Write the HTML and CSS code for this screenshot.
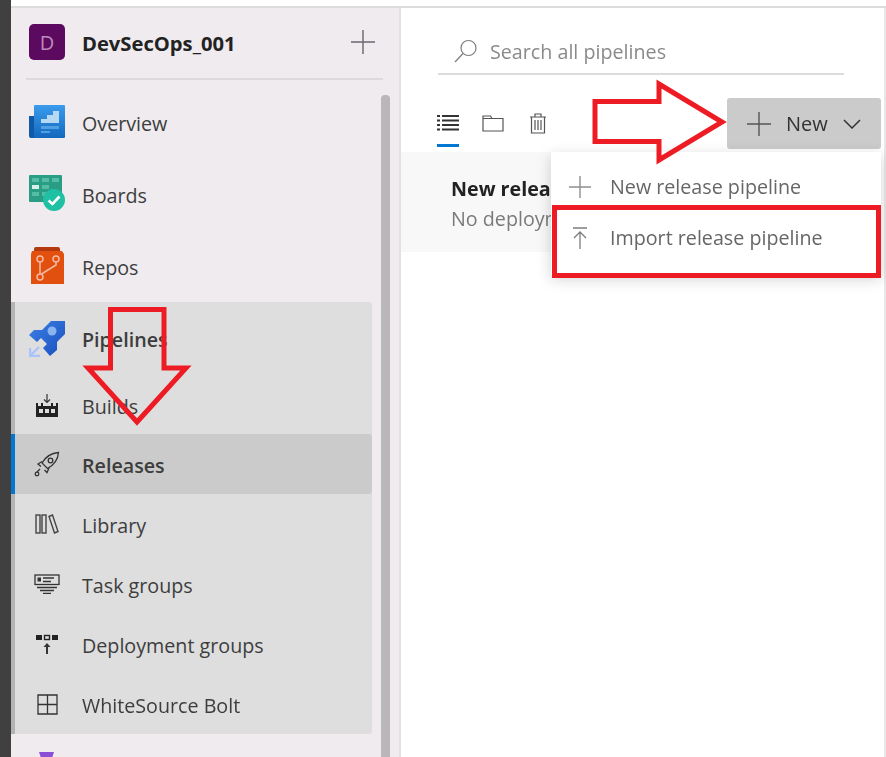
FILE: index.html

```html
<!DOCTYPE html>
<html lang="en">
<head>
  <meta charset="UTF-8">
  <title>Releases - Pipelines</title>
  <link rel="stylesheet" href="styles.css">
</head>
<body>
  <div class="page">
    <div class="topstrip"></div>
    <div class="shell">
      <div class="edge"></div>

      <aside class="sidebar">
        <div class="project">
          <div class="avatar">D</div>
          <div class="project-name">DevSecOps_001</div>
          <svg class="project-add" viewBox="0 0 24 24"><path d="M0 12H24M12 0V24" stroke="#6b6670" stroke-width="1.4" fill="none"/></svg>
        </div>
        <div class="sidebar-body">
          <nav class="nav">
            <a class="nav-item">
              <span class="nav-icon icon-up">
                <svg width="36" height="33" viewBox="0 1 36 33">
                  <defs><linearGradient id="ov" x1="0" y1="0" x2="0" y2="1"><stop offset="0" stop-color="#3b9bec"/><stop offset="1" stop-color="#1268bd"/></linearGradient></defs>
                  <path d="M0 12H7V34H2A2 2 0 0 1 0 32Z" fill="#0f5aa8"/>
                  <rect x="5" y="1" width="31" height="33" rx="1" fill="url(#ov)"/>
                  <path d="M12 19V15H18V11H24V7H30V19Z" fill="#b5d8f5"/>
                  <path d="M12 22H30V25H12ZM12 27H21V29H12Z" fill="#4f9fe2"/>
                </svg>
              </span>
              <span>Overview</span>
            </a>
            <a class="nav-item">
              <span class="nav-icon icon-up">
                <svg width="36" height="36" viewBox="0 0 36 36">
                  <rect x="0" y="0" width="33" height="27" rx="1" fill="#2a9d85"/>
                  <path d="M3 3H10V7H3ZM13 3H20V7H13ZM23 3H30V7H23ZM13 10H20V14H13ZM3 17H10V21H3ZM13 17H20V21H13Z" fill="#55bda6"/>
                  <rect x="3" y="10" width="7" height="4" fill="#d6f0ea"/>
                  <circle cx="25" cy="25" r="11" fill="#1fc0a3"/>
                  <path d="M19.500 25.500L23.500 29L30.500 21.500" stroke="#fff" stroke-width="2.600" fill="none"/>
                </svg>
              </span>
              <span>Boards</span>
            </a>
            <a class="nav-item nav-item-last">
              <span class="nav-icon icon-up">
                <svg width="36" height="38" viewBox="0 0 36 38">
                  <path d="M5 3Q5 1 7 1H29Q31 1 31 3V8H5Z" fill="#b5390f"/>
                  <path d="M3 5H33L35 8V38H2V8Z" fill="#e2500f"/>
                  <g stroke="#f3b9a0" stroke-width="1.500" fill="none">
                    <circle cx="11" cy="13" r="3"/><circle cx="27" cy="13" r="3"/><circle cx="11" cy="31" r="3"/>
                    <path d="M11 16V28M27 16V19L12.500 28"/>
                  </g>
                </svg>
              </span>
              <span>Repos</span>
            </a>

            <div class="group">
              <a class="nav-item group-head">
                <span class="nav-icon">
                  <svg width="36" height="36" viewBox="0 0 36 36">
                    <defs><linearGradient id="pl" x1="0" y1="0" x2="1" y2="1"><stop offset="0" stop-color="#3f80e6"/><stop offset="1" stop-color="#164fbd"/></linearGradient></defs>
                    <path d="M36 0H22L13 9H5L0 14L8 21L12 17L18 23L14 27L21 35L28 29V21L36 13Z" fill="url(#pl)"/>
                    <circle cx="23" cy="10" r="4.500" fill="#8ab4f0"/>
                    <path d="M1 27V35H11M2 34L10 26" stroke="#a9c4fb" stroke-width="2.400" fill="none"/>
                  </svg>
                </span>
                <span>Pipelines</span>
              </a>
              <a class="sub-item sub-builds">
                <span class="nav-icon">
                  <svg width="24" height="24" viewBox="0 0 24 24">
                    <path d="M12 0V8M9 5.500L12 8.500L15 5.500" stroke="#333" stroke-width="1.200" fill="none"/>
                    <path d="M1 9H3V12H6V9H8V12H16V9H18V12H21V9H23V23H1Z" fill="#222"/>
                    <path d="M4 15H8V19H4ZM10 15H14V19H10ZM16 15H20V19H16Z" fill="#dedede"/>
                  </svg>
                </span>
                <span>Builds</span>
              </a>
              <a class="sub-item selected">
                <span class="nav-icon">
                  <svg width="26" height="26" viewBox="0 0 26 26">
                    <g stroke="#333" stroke-width="1.300" fill="none">
                      <path d="M24.500 1.500C18 2 12 5 8 12L13.500 17.500C20 14 24 8 24.500 1.500Z"/>
                      <circle cx="16.500" cy="9.500" r="2.300"/>
                      <path d="M8 10.500L4 13L7 15.500M15 17L13 21.500L10.500 19"/>
                      <path d="M6 18L3 21"/>
                      <circle cx="3" cy="23" r="1.800"/>
                    </g>
                  </svg>
                </span>
                <span>Releases</span>
              </a>
              <a class="sub-item">
                <span class="nav-icon">
                  <svg width="24" height="20" viewBox="0 0 24 20">
                    <g stroke="#444" stroke-width="1.400" fill="none">
                      <rect x="1" y="1" width="4" height="18"/>
                      <rect x="7" y="1" width="4" height="18"/>
                      <path d="M14 2.500L17.500 1L23 17.500L19.500 19Z"/>
                    </g>
                  </svg>
                </span>
                <span>Library</span>
              </a>
              <a class="sub-item">
                <span class="nav-icon">
                  <svg width="26" height="20" viewBox="0 0 26 20">
                    <g stroke="#333" stroke-width="1.300" fill="none">
                      <rect x="1" y="1" width="24" height="9.500"/>
                      <path d="M9 4H20M9 7.500H17M3 13.500H23M6 16.500H20M9 19.300H17"/>
                    </g>
                    <rect x="3.500" y="3.500" width="3.500" height="4" fill="#333"/>
                  </svg>
                </span>
                <span>Task groups</span>
              </a>
              <a class="sub-item">
                <span class="nav-icon">
                  <svg width="22" height="20" viewBox="0 0 22 20">
                    <path d="M0 1H6V6H0ZM16 1H22V6H16Z" fill="#222"/>
                    <rect x="8.500" y="1.500" width="5" height="4" fill="none" stroke="#222" stroke-width="1.400"/>
                    <path d="M10 20V13H7.500L11 9L14.500 13H12V20Z" fill="#333"/>
                  </svg>
                </span>
                <span>Deployment groups</span>
              </a>
              <a class="sub-item">
                <span class="nav-icon">
                  <svg width="21" height="21" viewBox="0 0 21 21">
                    <path d="M1 1H20V20H1ZM10.500 1V20M1 10.500H20" stroke="#333" stroke-width="1.300" fill="none"/>
                  </svg>
                </span>
                <span>WhiteSource Bolt</span>
              </a>
            </div>

            <a class="nav-item">
              <span class="nav-icon">
                <svg width="36" height="36" viewBox="0 0 36 36">
                  <path d="M10 1H25L23 7H12Z" fill="#8a4fd6"/>
                </svg>
              </span>
            </a>
          </nav>
          <div class="scrollbar"></div>
        </div>
      </aside>

      <main class="main">
        <div class="search">
          <svg class="search-icon" width="24" height="24" viewBox="0 0 24 24">
            <circle cx="14.500" cy="9" r="7.500" stroke="#7d7d7d" stroke-width="1.200" fill="none"/>
            <path d="M9 14.500L1 23" stroke="#7d7d7d" stroke-width="1.200"/>
          </svg>
          <span>Search all pipelines</span>
        </div>

        <div class="toolbar">
          <div class="tabs">
            <div class="tab active">
              <svg width="22" height="18" viewBox="0 0 22 18">
                <path d="M5 2H22M5 6.500H22M5 11H22M5 15.500H22" stroke="#333" stroke-width="2.200" fill="none"/>
                <path d="M0 2H3M0 6.500H3M0 11H3M0 15.500H3" stroke="#333" stroke-width="2.200" fill="none"/>
              </svg>
            </div>
            <div class="tab">
              <svg width="22" height="17" viewBox="0 0 22 17">
                <path d="M1 1H8.500L10 3.500H21V16H1ZM1 3.500H10" stroke="#555" stroke-width="1.200" fill="none"/>
              </svg>
            </div>
            <div class="tab">
              <svg width="18" height="21" viewBox="0 0 18 21">
                <g stroke="#555" stroke-width="1.200" fill="none">
                  <path d="M1 4H17M6 4V1H12V4M2.500 4V20H15.500V4"/>
                  <path d="M6 7V17M9 7V17M12 7V17"/>
                </g>
              </svg>
            </div>
          </div>
          <button class="new-btn">
            <svg width="24" height="24" viewBox="0 0 24 24"><path d="M0 12H24M12 0V24" stroke="#555" stroke-width="1.400" fill="none"/></svg>
            <span>New</span>
            <svg class="chevron" width="18" height="10" viewBox="0 0 18 10"><path d="M1 1L9 9L17 1" stroke="#333" stroke-width="1.500" fill="none"/></svg>
          </button>
        </div>

        <div class="row-band">
          <div class="row-text">
            <div class="row-title">New release pipeline</div>
            <div class="row-sub">No deployments yet</div>
          </div>
        </div>

        <div class="menu">
          <div class="menu-item">
            <svg class="menu-icon" width="22" height="22" viewBox="0 0 22 22"><path d="M0 11H22M11 0V22" stroke="#8f8f8f" stroke-width="1.400" fill="none"/></svg>
            <span>New release pipeline</span>
          </div>
          <div class="menu-item">
            <svg class="menu-icon" width="22" height="22" viewBox="0 0 22 22"><path d="M4 1H18M11 22V5M5 11L11 5L17 11" stroke="#7d7d7d" stroke-width="1.300" fill="none"/></svg>
            <span>Import release pipeline</span>
          </div>
        </div>
      </main>
    </div>

    <!-- red annotations drawn over the screenshot -->
    <svg class="marks" width="886" height="757" viewBox="0 0 886 757">
      <g fill="none" stroke="#ed1c24" stroke-width="5">
        <polygon points="595,101.500 659,101.500 659,84 722,122 659,160 659,141.500 595,141.500"/>
        <polygon points="110.500,309.500 164,309.500 164,368 186,368 137,422 88,368 110.500,368"/>
        <rect x="554.500" y="207.500" width="324" height="68"/>
      </g>
    </svg>
  </div>
</body>
</html>
```

FILE: styles.css

```css
:root {
  --text: #3d3d3d;
  --sidebar: #efebef;
  --group: #dedede;
  --selected: #cbcbcb;
  --blue: #0078d4;
}
* { box-sizing: border-box; margin: 0; padding: 0; }
body {
  font-family: 'Open Sans', 'Noto Sans', sans-serif;
  font-size: 19.7px;
  color: var(--text);
  background: #fff;
}
.page {
  position: relative;
  width: 886px;
  height: 757px;
  overflow: hidden;
  display: flex;
  flex-direction: column;
}
.topstrip {
  height: 8px;
  flex-shrink: 0;
  margin-left: 11px;
  background: #fff;
  border-bottom: 2px solid #dcdcdc;
  box-shadow: -11px 0 0 #404040;
}
.shell {
  flex: 1;
  min-height: 0;
  display: flex;
  filter: blur(0.4px);
}
.edge {
  width: 11px;
  background: #404040;
  flex-shrink: 0;
}

/* sidebar */
.sidebar {
  width: 390px;
  flex-shrink: 0;
  background: var(--sidebar);
  border-right: 2px solid #e2e2e2;
  display: flex;
  flex-direction: column;
}
.project {
  height: 72px;
  margin: 0 16px 0 15px;
  padding: 0 8px 2px 3px;
  border-bottom: 2px solid #dcdadc;
  display: flex;
  align-items: center;
  flex-shrink: 0;
}
.avatar {
  width: 36px;
  height: 36px;
  border-radius: 5px;
  background: #5c0a5f;
  color: #bc8abc;
  font-size: 20px;
  display: flex;
  align-items: center;
  justify-content: center;
}
.project-name {
  flex: 1;
  margin-left: 17px;
  padding-top: 2px;
  font-weight: 700;
  font-size: 20.2px;
  color: #222;
}
.project-add { width: 24px; height: 24px; }
.sidebar-body {
  flex: 1;
  min-height: 0;
  display: flex;
}
.nav {
  width: 361px;
  padding-top: 8px;
  flex-shrink: 0;
}
.nav-item, .sub-item {
  display: flex;
  align-items: center;
  height: 72px;
  padding-left: 18px;
}
.nav-item { padding-bottom: 2px; }
.nav-item-last { margin-bottom: -2px; }
.nav-icon {
  width: 36px;
  margin-right: 17px;
  display: flex;
  align-items: center;
  justify-content: center;
  flex-shrink: 0;
}
.icon-up { margin-top: -4px; }
.group {
  background: var(--group);
  border-left: 4px solid #b4b4b4;
  border-radius: 0 3px 3px 0;
}
.group .nav-item { height: 76px; padding-left: 14px; font-weight: 600; }
.sub-item { height: 60px; padding-left: 14px; }
.sub-item span:last-child { padding-top: 2px; }
.sub-builds { height: 56px; }
.sub-builds span:last-child { padding-top: 0; }
.selected {
  background: var(--selected);
  margin-left: -4px;
  padding-left: 14px;
  border-left: 4px solid var(--blue);
  border-radius: 0 3px 3px 0;
  font-weight: 600;
}
.scrollbar {
  width: 9px;
  margin: 15px 0 0 9px;
  background: #b9b7ba;
  border-radius: 4px 4px 0 0;
}

/* main area */
.main {
  flex: 1;
  position: relative;
  min-width: 0;
  border-right: 2px solid #e8e8e8;
}
.search {
  margin: 0 40px 0 37px;
  height: 67px;
  padding-left: 16px;
  border-bottom: 2px solid #dcdcdc;
  display: flex;
  align-items: center;
  gap: 12px;
  color: #8a8a8a;
  padding-top: 21px;
}
.toolbar {
  height: 77px;
  padding: 0 3px 0 36px;
  display: flex;
  justify-content: space-between;
  align-items: flex-start;
}
.tabs {
  display: flex;
  gap: 23px;
  height: 72px;
}
.tab {
  height: 72px;
  width: 22px;
  padding-top: 24px;
  display: flex;
  justify-content: center;
  align-items: center;
}
.tab.active {
  padding-top: 27px;
  border-bottom: 3px solid var(--blue);
}
.new-btn {
  margin-top: 23px;
  width: 154px;
  height: 51px;
  border: none;
  border-radius: 3px;
  background: var(--selected);
  font-family: inherit;
  font-size: 20px;
  color: #333;
  display: flex;
  align-items: center;
  padding-left: 20px;
}
.new-btn span { margin-left: 15px; }
.chevron { margin-left: 15px; }
.row-band {
  height: 100px;
  padding: 22px 0 0 50px;
  background: #f8f8f8;
  margin-right: 3px;
  line-height: 30px;
}
/* the open menu covers the rest of these two lines */
.row-text {
  width: 100px;
  overflow: hidden;
  white-space: nowrap;
}
.row-title { font-weight: 700; color: #222; }
.row-sub { color: #7a7a7a; }
.menu {
  position: absolute;
  left: 150px;
  top: 144px;
  width: 330px;
  height: 123px;
  background: #fff;
  box-shadow: 0 4px 14px rgba(0,0,0,0.18);
  padding-top: 9px;
  color: #666;
}
.menu-item {
  height: 51px;
  display: flex;
  align-items: center;
  padding-left: 18px;
}
.menu-icon { margin-right: 19px; }
.marks {
  position: absolute;
  left: 0;
  top: 0;
  pointer-events: none;
}
```
